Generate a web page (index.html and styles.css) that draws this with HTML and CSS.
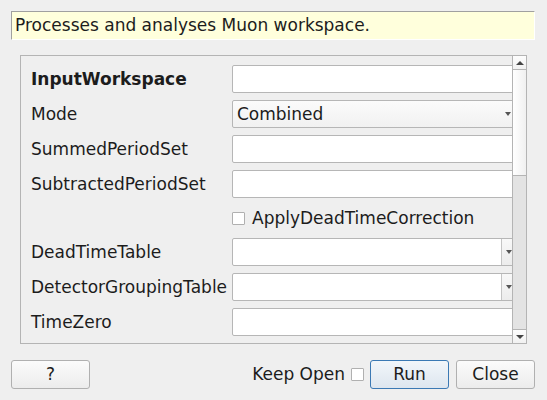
FILE: index.html
```html
<!DOCTYPE html>
<html>
<head>
<meta charset="utf-8">
<link rel="stylesheet" href="styles.css">
</head>
<body>
<div class="dialog">
  <div class="description">Processes and analyses Muon workspace.</div>
  <div class="scroll-frame">
    <div class="viewport">
      <div class="form">
        <div class="label bold">InputWorkspace</div>
        <div class="field"></div>

        <div class="label">Mode</div>
        <div class="field combo"><span class="combo-text">Combined</span><span class="combo-arrow"></span></div>

        <div class="label">SummedPeriodSet</div>
        <div class="field"></div>

        <div class="label">SubtractedPeriodSet</div>
        <div class="field"></div>

        <div class="label"></div>
        <div class="check-row"><span class="checkbox"></span><span>ApplyDeadTimeCorrection</span></div>

        <div class="label">DeadTimeTable</div>
        <div class="field edit-combo"><span class="edit-area"></span><span class="drop-btn"><span class="combo-arrow"></span></span></div>

        <div class="label">DetectorGroupingTable</div>
        <div class="field edit-combo"><span class="edit-area"></span><span class="drop-btn"><span class="combo-arrow"></span></span></div>

        <div class="label">TimeZero</div>
        <div class="field"></div>

        <div class="label"></div>
        <div class="field"></div>
      </div>
    </div>
    <div class="scrollbar">
      <div class="sb-btn"><span class="arrow-up"></span></div>
      <div class="sb-thumb"></div>
      <div class="sb-groove"></div>
      <div class="sb-btn sb-btn-bottom"><span class="arrow-down"></span></div>
    </div>
  </div>
  <div class="button-row">
    <button class="btn">?</button>
    <div class="right-group">
      <span class="keep-label">Keep Open</span>
      <span class="checkbox"></span>
      <button class="btn btn-default">Run</button>
      <button class="btn btn-close">Close</button>
    </div>
  </div>
</div>
</body>
</html>
```

FILE: styles.css
```css
* { box-sizing: border-box; }

html, body {
  margin: 0;
  padding: 0;
  background: #efefef;
  width: 547px;
  height: 400px;
  overflow: hidden;
}

body {
  font-family: "DejaVu Sans", sans-serif;
  font-size: 17px;
  color: #1c1c1c;
}

.dialog {
  padding: 11px 12px 0 11px;
  display: flex;
  flex-direction: column;
}

.description {
  height: 29px;
  width: 524px;
  background: #ffffdc;
  border-top: 1px solid #a0a0a0;
  border-left: 1px solid #a0a0a0;
  border-right: 1px solid #ffffff;
  border-bottom: 1px solid #ffffff;
  padding-left: 3px;
  line-height: 26px;
  white-space: nowrap;
}

.scroll-frame {
  margin-top: 15px;
  margin-left: 9px;
  width: 507px;
  height: 289px;
  border: 1px solid #b4b4b4;
  display: flex;
  overflow: hidden;
}

.viewport {
  width: 491px;
  height: 287px;
  overflow: hidden;
  padding: 9px 0 0 10px;
}

.form {
  display: grid;
  grid-template-columns: 201px 284px;
  grid-template-rows: repeat(4, 28px) 26px repeat(4, 28px);
  row-gap: 7px;
}

.label {
  display: flex;
  align-items: center;
  white-space: nowrap;
  padding-bottom: 1px;
}

.bold { font-weight: bold; }

.field {
  height: 28px;
  width: 284px;
  background: #ffffff;
  border: 1px solid #b6b6b6;
  border-radius: 2px;
}

.combo {
  background: linear-gradient(#fbfbfb, #f1f1f1);
  display: flex;
  align-items: center;
  justify-content: space-between;
  padding-left: 4px;
}

.combo-text { white-space: nowrap; padding-bottom: 1px; }

.combo .combo-arrow { margin-right: 4px; }

.combo-arrow {
  width: 0;
  height: 0;
  border-left: 3.5px solid transparent;
  border-right: 3.5px solid transparent;
  border-top: 4px solid #555555;
}

.edit-combo {
  display: flex;
}

.edit-area { flex: 1; }

.drop-btn {
  width: 14px;
  border-left: 1px solid #c4c4c4;
  background: linear-gradient(#f8f8f8, #ececec);
  display: flex;
  align-items: center;
  justify-content: center;
}

.check-row {
  display: flex;
  align-items: center;
  gap: 7px;
  white-space: nowrap;
}

.check-row span:last-child { padding-bottom: 1px; }

.checkbox {
  width: 13px;
  height: 13px;
  background: #ffffff;
  border: 1px solid #b0b0b0;
  border-radius: 1px;
  flex: none;
}

.scrollbar {
  width: 14px;
  height: 287px;
  border-left: 1px solid #b4b4b4;
  display: flex;
  flex-direction: column;
  background: #e3e3e3;
}

.sb-btn {
  height: 14px;
  background: linear-gradient(#fdfdfd, #f1f1f1);
  border-bottom: 1px solid #b4b4b4;
  display: flex;
  align-items: center;
  justify-content: center;
  flex: none;
}

.sb-btn-bottom {
  border-bottom: none;
  border-top: 1px solid #b4b4b4;
}

.sb-thumb {
  height: 106px;
  flex: none;
  background: linear-gradient(90deg, #ffffff, #f0f0f0);
  border-bottom: 1px solid #b4b4b4;
}

.sb-groove {
  flex: 1;
  background: #e3e3e3;
}

.arrow-up {
  width: 0;
  height: 0;
  border-left: 4px solid transparent;
  border-right: 4px solid transparent;
  border-bottom: 4px solid #444444;
}

.arrow-down {
  width: 0;
  height: 0;
  border-left: 4px solid transparent;
  border-right: 4px solid transparent;
  border-top: 4px solid #444444;
}

.button-row {
  margin-top: 16px;
  width: 524px;
  display: flex;
  justify-content: space-between;
  align-items: center;
}

.right-group {
  display: flex;
  align-items: center;
  gap: 6px;
}

.keep-label { white-space: nowrap; padding-bottom: 1px; }

.btn {
  font-family: "DejaVu Sans", sans-serif;
  font-size: 17px;
  color: #1c1c1c;
  width: 79px;
  height: 29px;
  padding: 0 0 1px 0;
  border: 1px solid #b0b0b0;
  border-radius: 3px;
  background: linear-gradient(#fbfbfb, #ececec);
}

.btn-close { margin-left: 1px; }

.btn-default {
  border-color: #3b79b4;
  background: linear-gradient(#f2f6fa, #dde6ef);
}
```
